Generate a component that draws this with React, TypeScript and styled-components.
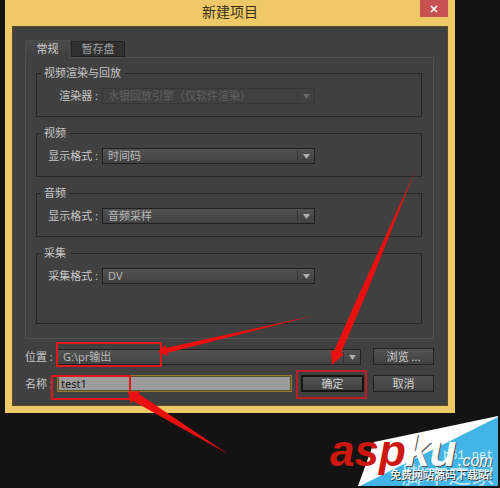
import React, { useState } from "react";
import styled, { createGlobalStyle } from "styled-components";

const GlobalStyle = createGlobalStyle`
  * { box-sizing: border-box; }
  html, body { margin: 0; background: #131313; }
  body, button, input, select {
    font-family: "Noto Sans", "Noto Sans CJK SC", sans-serif;
    font-size: 11px;
    line-height: 14px;
  }
`;

const Desktop = styled.main`
  position: relative;
  min-height: 100vh;
  padding: 0 45px 0 5px;
  overflow: hidden;
`;

const Dialog = styled.section`
  padding: 0 7px 7px;
  background: #efc868;
`;

const TitleBar = styled.header`
  display: grid;
  grid-template-columns: 28px 1fr 28px;
  height: 26px;
`;

const Title = styled.h1`
  grid-column: 2;
  margin: 0;
  text-align: center;
  font-size: 14px;
  font-weight: 400;
  line-height: 24px;
  color: #3a3018;
`;

const CloseButton = styled.button`
  display: flex;
  align-items: center;
  justify-content: center;
  height: 17px;
  padding: 0;
  border: 0;
  background: #c75050;
`;

const Content = styled.form`
  padding: 14px 14px 14px 13px;
  background: #404040;
  box-shadow: 0 0 0 1px #5a4c2c inset;
  color: #c8c8c8;
`;

const Tabs = styled.div`
  display: flex;
  align-items: flex-end;
  gap: 1px;
`;

const Tab = styled.button<{ $active: boolean }>`
  height: ${(p) => (p.$active ? 18 : 16)}px;
  width: ${(p) => (p.$active ? 45 : 54)}px;
  margin-bottom: ${(p) => (p.$active ? -1 : 0)}px;
  padding: 0;
  border: 1px solid ${(p) => (p.$active ? "#4d4d4d" : "#222")};
  border-bottom-color: ${(p) => (p.$active ? "#404040" : "#1c1c1c")};
  background: ${(p) => (p.$active ? "linear-gradient(#4a4a4a, #404040)" : "#303030")};
  color: ${(p) => (p.$active ? "#d0d0d0" : "#a0a0a0")};
`;

const Panel = styled.div`
  display: flex;
  flex-direction: column;
  gap: 9px;
  padding: 8px 11px 14px 10px;
  border: 1px solid #505050;
`;

const Group = styled.fieldset<{ $tall?: boolean }>`
  min-width: 0;
  margin: 0;
  padding: 8px 0 ${(p) => (p.$tall ? 39 : 12)}px;
  border: 1px solid #262626;
`;

const Legend = styled.legend`
  height: 14px;
  margin-left: 4px;
  padding: 0 4px 0 3px;
`;

const Field = styled.div`
  display: grid;
  grid-template-columns: 61px minmax(0, 213px);
  align-items: center;
  gap: 4px;
`;

const FieldLabel = styled.label`
  text-align: right;
  white-space: nowrap;
`;

const SelectBox = styled.div<{ $muted?: boolean }>`
  position: relative;
  flex: 1;
  min-width: 0;
  height: 16px;
  color: ${(p) => (p.$muted ? "#606060" : "#b8b8b8")};

  svg {
    position: absolute;
    top: 2px;
    right: 1px;
    pointer-events: none;
  }
`;

const Select = styled.select`
  display: block;
  width: 100%;
  height: 16px;
  padding: 0 20px 0 5px;
  appearance: none;
  border: 1px solid #202020;
  border-radius: 0;
  background: linear-gradient(#525252, #414141);
  color: inherit;
  line-height: 14px;

  &:disabled {
    border-color: #363636;
    background: #404040;
    opacity: 1;
  }
`;

const Footer = styled.div`
  display: grid;
  gap: 10px;
  margin-top: 9px;
`;

const FooterRow = styled.div<{ $gap: number }>`
  display: flex;
  align-items: center;
  gap: ${(p) => p.$gap}px;
  height: 17px;
`;

const FooterField = styled.div`
  display: flex;
  flex: 1;
  align-items: center;
  min-width: 0;

  label {
    flex: 0 0 32px;
    white-space: nowrap;
  }
`;

const NameInput = styled.input`
  flex: 1;
  min-width: 0;
  height: 17px;
  padding: 0 0 1px 3px;
  border: 1px solid #9a7b28;
  border-radius: 0;
  outline: 0;
  background: #9c9c9c;
  box-shadow: inset 0 0 0 1px #55502f;
  color: #151515;
`;

const Button = styled.button<{ $primary?: boolean }>`
  width: ${(p) => (p.$primary ? 63 : 61)}px;
  height: 17px;
  padding: 0;
  border: ${(p) => (p.$primary ? 2 : 1)}px solid ${(p) => (p.$primary ? "#141414" : "#222")};
  background: linear-gradient(#525252, #414141);
  color: #d0d0d0;
  line-height: 12px;
`;

const Annotations = styled.svg`
  position: absolute;
  top: 0;
  left: 0;
  pointer-events: none;
`;

const Watermark = styled.aside`
  position: absolute;
  top: 416px;
  right: 2px;
  width: 168px;
  height: 72px;
  pointer-events: none;

  svg {
    display: block;
    overflow: visible;
  }
`;

function Arrow({ muted }: { muted?: boolean }) {
  return (
    <svg width="18" height="12" viewBox="0 0 18 12" aria-hidden="true">
      <path d="M1.5 1v10" stroke={muted ? "#383838" : "#303030"} />
      <path d="M7 4h7l-3.500 5z" fill={muted ? "#696969" : "#b0b0b0"} />
    </svg>
  );
}

type PickerProps = { id: string; value: string; disabled?: boolean };

function Picker({ id, value, disabled }: PickerProps) {
  return (
    <SelectBox $muted={disabled}>
      <Select id={id} defaultValue={value} disabled={disabled}>
        <option>{value}</option>
      </Select>
      <Arrow muted={disabled} />
    </SelectBox>
  );
}

const groups = [
  { id: "renderer", title: "视频渲染与回放", label: "渲染器", value: "水银回放引擎（仅软件渲染）", disabled: true },
  { id: "video", title: "视频", label: "显示格式", value: "时间码" },
  { id: "audio", title: "音频", label: "显示格式", value: "音频采样" },
  { id: "capture", title: "采集", label: "采集格式", value: "DV", tall: true },
];

const tabs = ["常规", "暂存盘"];

export default function App() {
  const [tab, setTab] = useState(0);
  const [name, setName] = useState("test1");

  return (
    <>
      <GlobalStyle />
      <Desktop lang="zh-CN">
        <Dialog role="dialog" aria-labelledby="title">
          <TitleBar>
            <Title id="title">新建项目</Title>
            <CloseButton type="button" aria-label="关闭">
              <svg width="8" height="8" viewBox="0 0 8 8" aria-hidden="true">
                <path d="M1 1l6 6M7 1L1 7" stroke="#fff" strokeWidth="1.600" />
              </svg>
            </CloseButton>
          </TitleBar>
          <Content onSubmit={(e) => e.preventDefault()}>
            <Tabs role="tablist">
              {tabs.map((t, i) => (
                <Tab key={t} type="button" role="tab" aria-selected={tab === i} $active={tab === i} onClick={() => setTab(i)}>
                  {t}
                </Tab>
              ))}
            </Tabs>
            <Panel role="tabpanel">
              {groups.map((g) => (
                <Group key={g.id} $tall={g.tall}>
                  <Legend>{g.title}</Legend>
                  <Field>
                    <FieldLabel htmlFor={g.id}>{g.label} :</FieldLabel>
                    <Picker id={g.id} value={g.value} disabled={g.disabled} />
                  </Field>
                </Group>
              ))}
            </Panel>
            <Footer>
              <FooterRow $gap={12}>
                <FooterField>
                  <label htmlFor="location">位置 :</label>
                  <Picker id="location" value="G:\pr输出" />
                </FooterField>
                <Button type="button">浏览 ...</Button>
              </FooterRow>
              <FooterRow $gap={9}>
                <FooterField>
                  <label htmlFor="name">名称 :</label>
                  <NameInput id="name" value={name} onChange={(e) => setName(e.target.value)} />
                </FooterField>
                <Button type="submit" $primary>确定</Button>
                <Button type="button">取消</Button>
              </FooterRow>
            </Footer>
          </Content>
        </Dialog>

        <Annotations width="500" height="488" viewBox="0 0 500 488" aria-hidden="true">
          <g fill="none" stroke="#e01818" strokeWidth="2">
            <path d="M57 343h104v23H57z" />
            <path d="M52 376h78v23H52z" />
            <path d="M297 371h69v27h-69z" stroke="#b82026" />
          </g>
          <g fill="#ec0f0f">
            <path d="M158 352l7-7 1 3 150-33-149 38 1 3z" />
            <path d="M332 365l-1-15 3 1 27-61 54-119-48 121-26 61 3 1z" />
            <path d="M128 392l12-1-1 3 89 60-95-53-2 3z" />
          </g>
        </Annotations>

        <Watermark>
          <svg width="168" height="72" viewBox="330 416 168 72" role="img" aria-label="aspku.com">
            <path d="M358 486l16-44 124-26v70z" fill="#fff" />
            <path d="M360 486l138-69v69z" fill="#42b4e6" />
            <text x="443" y="459" fontFamily="Liberation Mono" fontSize="12" fill="#d9f1fb">b51.net</text>
            <text x="402" y="483" fontFamily="Noto Sans CJK SC" fontSize="23" fill="#bfe6f7">脚本之家</text>
            <g fontFamily="Liberation Sans" fontStyle="italic">
              <g fontSize="44" fontWeight="700">
                <text x="406" y="467" fill="#555">ku</text>
                <text x="330" y="466" fill="#cc1810">asp</text>
                <text x="405" y="466" fill="#fff">ku</text>
              </g>
              <text x="459" y="467" fontSize="16" fill="#47606c">.com</text>
              <text x="458" y="466" fontSize="16" fill="#fff">.com</text>
            </g>
            <g fontFamily="Noto Sans CJK SC" fontSize="11" fontWeight="500">
              <text x="391" y="480" fill="#333">免费网站源码下载站!</text>
              <text x="390" y="479" fill="#fff">免费网站源码下载站!</text>
            </g>
          </svg>
        </Watermark>
      </Desktop>
    </>
  );
}
